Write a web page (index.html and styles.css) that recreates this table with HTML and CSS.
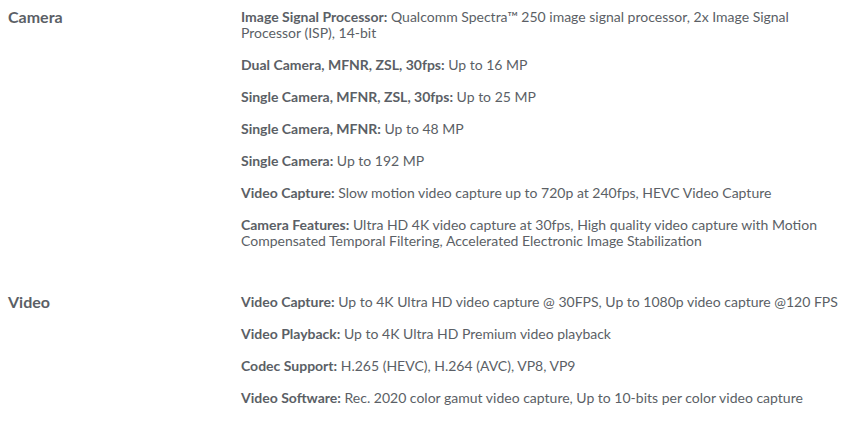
FILE: index.html
```html
<!DOCTYPE html>
<html lang="en">
<head>
<meta charset="utf-8">
<title>Specs</title>
<link rel="stylesheet" href="styles.css">
</head>
<body>
<div class="specs">
  <section class="group">
    <h3 class="label">Camera</h3>
    <div class="items">
      <p><b>Image Signal Processor:</b> Qualcomm Spectra™ 250 image signal processor, 2x Image Signal Processor (ISP), 14-bit</p>
      <p><b>Dual Camera, MFNR, ZSL, 30fps:</b> Up to 16 MP</p>
      <p><b>Single Camera, MFNR, ZSL, 30fps:</b> Up to 25 MP</p>
      <p><b>Single Camera, MFNR:</b> Up to 48 MP</p>
      <p><b>Single Camera:</b> Up to 192 MP</p>
      <p><b>Video Capture:</b> Slow motion video capture up to 720p at 240fps, HEVC Video Capture</p>
      <p><b>Camera Features:</b> Ultra HD 4K video capture at 30fps, High quality video capture with Motion Compensated Temporal Filtering, Accelerated Electronic Image Stabilization</p>
    </div>
  </section>
  <section class="group">
    <h3 class="label">Video</h3>
    <div class="items">
      <p><b>Video Capture:</b> Up to 4K Ultra HD video capture @ 30FPS, Up to 1080p video capture @120 FPS</p>
      <p><b>Video Playback:</b> Up to 4K Ultra HD Premium video playback</p>
      <p><b>Codec Support:</b> H.265 (HEVC), H.264 (AVC), VP8, VP9</p>
      <p><b>Video Software:</b> Rec. 2020 color gamut video capture, Up to 10-bits per color video capture</p>
    </div>
  </section>
</div>
</body>
</html>
```
FILE: styles.css
```css
html, body {
  margin: 0;
  padding: 0;
  background: #ffffff;
}
body {
  font-family: "Lato", "Noto Sans", sans-serif;
  color: #5b5f66;
}
.specs {
  padding: 9px 0 0 8px;
  width: 850px;
  box-sizing: border-box;
}
.group {
  display: grid;
  grid-template-columns: 233px 1fr;
  padding-bottom: 29px;
}
.group:last-child {
  padding-bottom: 0;
}
.label {
  margin: 0;
  font-size: 16px;
  line-height: 16px;
  font-weight: 700;
}
.items p {
  margin: 0 0 16px 0;
  font-size: 14px;
  line-height: 16px;
}
.group:last-child .items p:last-child {
  margin-bottom: 0;
}
.items b {
  font-weight: 700;
}
```
